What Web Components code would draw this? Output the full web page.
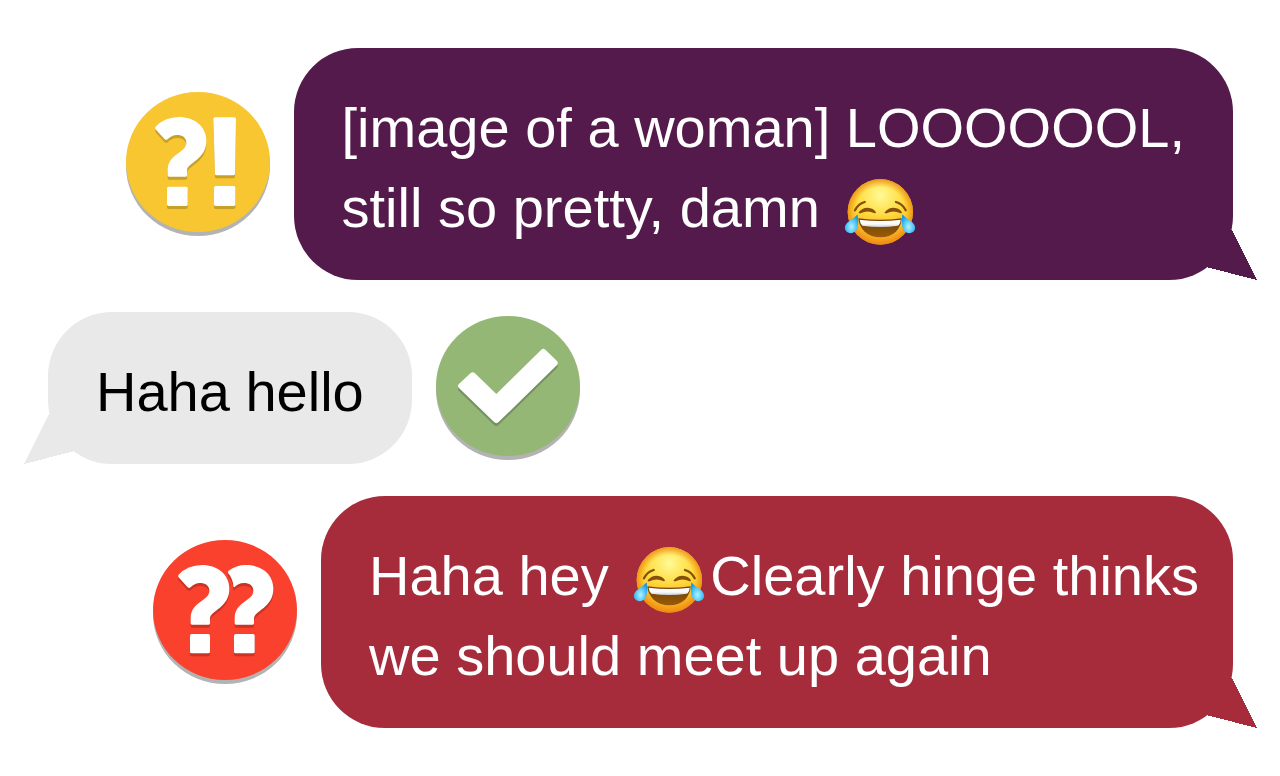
<!DOCTYPE html>
<html lang="en">
<head>
<meta charset="utf-8">
<meta name="viewport" content="width=device-width, initial-scale=1">
<title>Chat review</title>
<style>
  body { margin: 0; background: #fff; font-family: "Liberation Sans", Arial, sans-serif; }
</style>
</head>
<body>
<chat-thread>
  <chat-row side="sent">
    <move-badge kind="dubious"></move-badge>
    <chat-bubble side="sent" tone="purple">[image of a woman] LOOOOOOL,<br>still so pretty, damn <joy-emoji></joy-emoji></chat-bubble>
  </chat-row>
  <chat-row side="received">
    <chat-bubble side="received" tone="grey">Haha hello</chat-bubble>
    <move-badge kind="good"></move-badge>
  </chat-row>
  <chat-row side="sent">
    <move-badge kind="blunder"></move-badge>
    <chat-bubble side="sent" tone="red" snug>Haha hey <joy-emoji></joy-emoji>Clearly hinge thinks<br>we should meet up again</chat-bubble>
  </chat-row>
</chat-thread>

<script>
class ShadowElement extends HTMLElement {
  connectedCallback() {
    if (!this.shadowRoot) this.attachShadow({ mode: "open" }).innerHTML = this.render();
  }
}

customElements.define("chat-thread", class extends ShadowElement {
  render() {
    return `<style>
      :host { display: flex; flex-direction: column; gap: 32px; padding: 48px 47px 48px 48px; }
    </style><slot></slot>`;
  }
});

customElements.define("chat-row", class extends ShadowElement {
  render() {
    return `<style>
      :host { display: flex; align-items: center; gap: 24px; }
      :host([side="sent"]) { justify-content: flex-end; }
    </style><slot></slot>`;
  }
});

customElements.define("chat-bubble", class extends ShadowElement {
  render() {
    return `<style>
      :host { display: block; position: relative; padding: 40px 48px 32px; border-radius: 64px;
              font-size: 56px; line-height: 80px; color: #fff; background: var(--tone); }
      :host([tone="purple"]) { --tone: #541a4b; }
      :host([tone="red"]) { --tone: #a62c3b; }
      :host([tone="grey"]) { --tone: #e9e9e9; color: #000; }
      :host([snug]) { padding-right: 34px; }
      p { margin: 0; }
      svg { position: absolute; right: -24px; bottom: 0; width: 51px; height: 50px; fill: var(--tone); }
      :host([side="received"]) svg { right: auto; left: -24px; transform: scaleX(-1); }
    </style>
    <svg viewBox="0 0 51 50" shape-rendering="crispEdges" aria-hidden="true"><path d="M26 0 51 50 0 37V12z"/></svg>
    <p><slot></slot></p>`;
  }
});

const QUESTION = "M118 141Q145 111 190 111C232 111 271 137 271 182C271 240 213 247 213 272V286q0 4-4 4H159q-4 0-4-4V270C157 218 211 220 211 188C211 172 198 165 183 165C172 165 162 170 155 178q-5 3-9 0L120 149q-4-4-2-8z";
const SECOND = "M257 122Q280 105 308 105C355 105 391 131 391 176C391 234 333 241 333 266V280q0 4-4 4H279q-4 0-4-4V264C277 212 331 214 331 182C331 166 318 159 303 159C290 159 281 165 275 171Q272 173 271 168Q270 148 256 130Q253 125 257 122z";
const BADGES = {
  dubious: {
    label: "Dubious", fill: "#f7c631", shade: "#c6a029", shift: "translate(-30 -36)",
    mark: `<path d="${QUESTION}"/><rect x="153" y="320" width="62" height="58" rx="5"/>
      <path d="M297 112H355q5 0 5 5L357 281q0 5-5 5H302q-5 0-5-5L292 117q0-5 5-5z"/><rect x="294" y="318" width="64" height="60" rx="5"/>`
  },
  good: {
    label: "Good", fill: "#95b776", shade: "#769260", shift: "translate(-30 -33)",
    mark: `<path d="M134 204q6-5 12 0L211 267 346 134q6-5 12 0L393 168q5 6 0 12L217 352q-6 5-12 0L98 248q-4-5 0-10z"/>`
  },
  blunder: {
    label: "Blunder", fill: "#fa412d", shade: "#c83425", shift: "translate(-30 -30)",
    mark: `<path d="${QUESTION}" transform="translate(-12 -6)"/><rect x="141" y="312" width="60" height="58" rx="5"/>
      <path d="${SECOND}"/><rect x="273" y="312" width="62" height="58" rx="5"/>`
  }
};

customElements.define("move-badge", class extends ShadowElement {
  render() {
    const b = BADGES[this.getAttribute("kind")];
    return `<style>
      :host { display: block; flex: none; width: 144px; height: 144px; }
      svg { display: block; width: 100%; height: 100%; }
    </style>
    <svg viewBox="0 0 432 432" role="img" aria-label="${b.label}">
      <ellipse cx="216" cy="222" rx="216" ry="210" fill="#b3b3b3"/>
      <ellipse cx="216" cy="210" rx="216" ry="210" fill="${b.fill}"/>
      <g transform="${b.shift}">
        <g fill="${b.shade}" transform="translate(0 9)">${b.mark}</g>
        <g fill="#fff">${b.mark}</g>
      </g>
    </svg>`;
  }
});

customElements.define("joy-emoji", class extends ShadowElement {
  render() {
    return `<style>
      :host { display: inline-block; width: 72px; height: 72px; margin: 0 5px 0 9px; vertical-align: -21px; }
      svg { display: block; width: 100%; height: 100%; }
    </style>
    <svg viewBox="27 18 216 216" role="img" aria-label="Face with tears of joy">
      <defs>
        <linearGradient id="skin" x1="0" y1="0" x2="0" y2="1">
          <stop offset="0" stop-color="#ffe04a"/><stop offset=".5" stop-color="#ffd535"/><stop offset="1" stop-color="#f7a01e"/>
        </linearGradient>
        <radialGradient id="rim">
          <stop offset=".76" stop-color="#ee8a10" stop-opacity="0"/><stop offset="1" stop-color="#e9860c" stop-opacity=".8"/>
        </radialGradient>
        <radialGradient id="glow" cx=".5" cy=".25" r=".42">
          <stop offset="0" stop-color="#fffa9a"/><stop offset="1" stop-color="#fff06a" stop-opacity="0"/>
        </radialGradient>
        <linearGradient id="teeth" x1="0" y1="0" x2="0" y2="1">
          <stop offset="0" stop-color="#fff"/><stop offset=".6" stop-color="#fafafa"/><stop offset="1" stop-color="#c9ced3"/>
        </linearGradient>
        <linearGradient id="mouth" x1="0" y1="0" x2="0" y2="1">
          <stop offset="0" stop-color="#6f4006"/><stop offset="1" stop-color="#985c08"/>
        </linearGradient>
        <radialGradient id="tear" cx=".5" cy=".66" r=".62">
          <stop offset="0" stop-color="#b2f0ff"/><stop offset=".4" stop-color="#6fd6fa"/><stop offset="1" stop-color="#149be8"/>
        </radialGradient>
      </defs>
      <circle cx="136" cy="126" r="98" fill="url(#skin)"/>
      <circle cx="136" cy="126" r="98" fill="url(#glow)"/>
      <circle cx="136" cy="126" r="98" fill="url(#rim)"/>
      <g fill="none" stroke="#85500c" stroke-linecap="round" stroke-width="7">
        <path d="M60 121Q69 102 89 96M212 121Q203 102 183 96"/>
      </g>
      <path fill="#85500c" d="M71 127Q80 113 98 113Q116 114 123 127Q122 131 117 129Q97 119 77 130Q70 131 71 127zM149 127Q158 113 176 113Q194 114 201 127Q200 131 195 129Q175 119 155 130Q148 131 149 127z"/>
      <path fill="url(#mouth)" d="M70 145Q135 154 200 145Q199 168 183 185Q164 202 136 202Q108 202 89 185Q71 168 70 145z"/>
      <path fill="url(#teeth)" d="M74 149Q135 157 197 149Q196 163 188 167Q136 175 82 167Q75 162 74 149z"/>
      <path fill="url(#tear)" d="M68 133C71 155 70 170 64 180C57 192 40 192 33 183C25 173 31 161 43 153Q58 145 68 133z"/>
      <path fill="url(#tear)" d="M202 133C199 155 200 170 206 180C213 192 230 192 237 183C245 173 239 161 227 153Q212 145 202 133z"/>
    </svg>`;
  }
});
</script>
</body>
</html>
